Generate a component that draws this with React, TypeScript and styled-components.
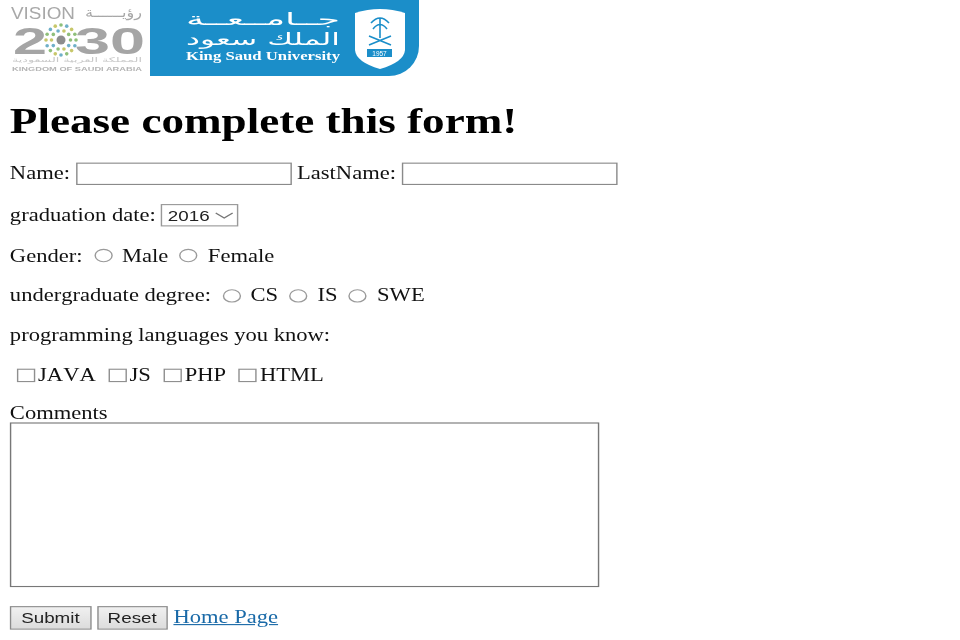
import React from 'react'
import styled, { createGlobalStyle } from 'styled-components'

const Global = createGlobalStyle`
	html, body {
		margin: 0;
		padding: 0;
		background: #fff;
	}
	body {
		font-family: 'Liberation Serif', 'Times New Roman', serif;
		font-size: 16px;
		color: #111;
		overflow: hidden;
	}
`

const Page = styled.div`
	width: 960px;
	height: 640px;
	overflow: hidden;
`

const Header = styled.header`
	display: flex;
	height: 76px;
	filter: blur(0.45px);
`

const BlueLogo = styled.div`
	width: 269px;
	height: 76px;
	background: #1b8ec9;
	border-bottom-right-radius: 30px;
`

/* the whole form is wider and taller than a normal page, like the picture */
const Stretched = styled.div`
	width: 681px;
	padding-left: 7px;
	box-sizing: border-box;
	transform: scale(1.41, 1.12);
	transform-origin: left top;
	filter: blur(0.3px);
`

const Title = styled.h1`
	font-size: 32px;
	font-weight: bold;
	line-height: 36px;
	margin: 24.7px 0 18.6px;
	color: #000;
`

const Row = styled.div<{ $gap: number }>`
	display: flex;
	align-items: center;
	height: 20px;
	margin-bottom: ${(p) => p.$gap}px;
	white-space: pre;
	font-kerning: none;
`

const TextInput = styled.input`
	width: 153px;
	height: 20.5px;
	box-sizing: border-box;
	margin: 0.8px 4px 0;
	border: 1px solid #8a8a8a;
	padding: 0;
	background: #fff;
`

const YearSelect = styled.select`
	appearance: none;
	width: 55px;
	height: 19.6px;
	box-sizing: border-box;
	margin: 0 0 0 3.5px;
	border: 1px solid #999;
	border-radius: 0;
	padding: 0 0 0 4px;
	font-family: 'Liberation Sans', Arial, sans-serif;
	font-size: 13.33px;
	color: #222;
	background: #fff url("data:image/svg+xml,%3Csvg xmlns='http://www.w3.org/2000/svg' width='14' height='7'%3E%3Cpath d='M1 1l6 4.5L13 1' fill='none' stroke='%23777'/%3E%3C/svg%3E") no-repeat right 2px center;
`

const Radio = styled.input.attrs({ type: 'radio' })`
	appearance: none;
	flex: none;
	width: 13px;
	height: 12px;
	margin: 0 7px 1px 8px;
	border: 1px solid #9a9a9a;
	border-radius: 50%;
	background: #fff;
`

const Check = styled.input.attrs({ type: 'checkbox' })<{ $first?: boolean }>`
	appearance: none;
	flex: none;
	width: 13px;
	height: 12px;
	margin: 0 2px 0 ${(p) => (p.$first ? 5 : 9)}px;
	border: 1px solid #8f8f8f;
	background: #fff;
`

const CommentLabel = styled.div`
	line-height: 16px;
	height: 16px;
`

const Comments = styled.textarea`
	display: block;
	width: 418px;
	height: 147.3px;
	box-sizing: border-box;
	margin: 0 0 17px;
	border: 1px solid #777;
	padding: 0;
	resize: none;
	background: #fff;
`

const Actions = styled.div`
	display: flex;
	align-items: center;
	height: 20.5px;
`

const ActionButton = styled.button<{ $w: number }>`
	height: 20.5px;
	box-sizing: border-box;
	width: ${(p) => p.$w}px;
	padding: 0;
	margin-right: 4px;
	border: 1px solid #8a8a8a;
	background: linear-gradient(#f0f0f0, #dcdcdc);
	font-family: 'Liberation Sans', Arial, sans-serif;
	font-size: 13.33px;
	color: #222;
`

const HomeLink = styled.a`
	color: #1a6aa8;
	text-decoration: underline;
`

function VisionLogo() {
	const colors = ['#8fbf7a', '#6fb0c8', '#c7c76a']
	const ring = (count: number, r: number, size: number) =>
		Array.from({ length: count }, (_, i) => {
			const a = (i / count) * Math.PI * 2
			return (
				<circle
					key={`${r}-${i}`}
					cx={61 + Math.cos(a) * r}
					cy={40 + Math.sin(a) * r}
					r={size}
					fill={colors[i % 3]}
				/>
			)
		})
	return (
		<svg width={150} height={76} viewBox='0 0 150 76'>
			<text x={11} y={19} fontFamily='Liberation Sans' fontSize={16} fill='#a8a8a8' textLength={64} lengthAdjust='spacingAndGlyphs'>VISION</text>
			<text x={142} y={17} textAnchor='end' fontFamily='DejaVu Sans' fontSize={14} fill='#a8a8a8' textLength={57} lengthAdjust='spacingAndGlyphs'>رؤيــــــة</text>
			<text x={13} y={54} fontFamily='Liberation Sans' fontWeight='bold' fontSize={37} fill='#a5a5a5' textLength={34} lengthAdjust='spacingAndGlyphs'>2</text>
			<text x={75} y={54} fontFamily='Liberation Sans' fontWeight='bold' fontSize={37} fill='#a5a5a5' textLength={70} lengthAdjust='spacingAndGlyphs'>30</text>
			{ring(16, 15, 1.8)}
			{ring(10, 9.5, 1.8)}
			<circle cx={61} cy={40} r={4.5} fill='#8d8d8d' />
			<text x={142} y={62} textAnchor='end' fontFamily='DejaVu Sans' fontSize={6.5} fill='#c8c8c8' textLength={130} lengthAdjust='spacingAndGlyphs'>المملكة العربية السعودية</text>
			<text x={12} y={71} fontFamily='Liberation Sans' fontWeight='bold' fontSize={5.5} fill='#b5b5b5' textLength={130} lengthAdjust='spacingAndGlyphs'>KINGDOM OF SAUDI ARABIA</text>
		</svg>
	)
}

function KsuMark() {
	return (
		<svg width={269} height={76} viewBox='0 0 269 76'>
			<text x={190} y={25} textAnchor='end' fontFamily='DejaVu Sans' fontSize={17} fill='#fff' textLength={154} lengthAdjust='spacingAndGlyphs'>جــامــعــة</text>
			<text x={190} y={45} textAnchor='end' fontFamily='DejaVu Sans' fontSize={17} fill='#fff' textLength={154} lengthAdjust='spacingAndGlyphs'>الملك سعود</text>
			<text x={36} y={60} fontFamily='Liberation Serif' fontWeight='bold' fontSize={12.5} fill='#fff' textLength={154} lengthAdjust='spacingAndGlyphs'>King Saud University</text>
			<path d='M205 13 Q230 5 255 13 V50 Q254 62 230 69 Q206 62 205 50 Z' fill='#fff' />
			<path d='M230 18 V38 M221 23 Q230 13 239 23 M223 29 Q230 20 237 29 M219 36 L241 45 M241 36 L219 45' fill='none' stroke='#1b8ec9' strokeWidth={1.6} />
			<rect x={217} y={49} width={25} height={8} fill='#1b8ec9' />
			<text x={229.5} y={55.5} textAnchor='middle' fontFamily='Liberation Sans' fontSize={6.5} fill='#fff'>1957</text>
		</svg>
	)
}

export default function App() {
	return (
		<Page>
			<Global />
			<Header>
				<VisionLogo />
				<BlueLogo>
					<KsuMark />
				</BlueLogo>
			</Header>
			<Stretched>
				<form>
					<Title>Please complete this form!</Title>
					<Row $gap={17.5}>
						Name:<TextInput />LastName:<TextInput />
					</Row>
					<Row $gap={16.6}>
						graduation date:
						<YearSelect defaultValue='2016'>
							<option>2016</option>
							<option>2017</option>
						</YearSelect>
					</Row>
					<Row $gap={15.7}>
						Gender:<Radio name='gender' />Male<Radio name='gender' />Female
					</Row>
					<Row $gap={14.9}>
						undergraduate degree:<Radio name='degree' />CS<Radio name='degree' />IS<Radio name='degree' />SWE
					</Row>
					<Row $gap={15.6}>programming languages you know:</Row>
					<Row $gap={16}>
						<Check $first />JAVA<Check />JS<Check />PHP<Check />HTML
					</Row>
					<CommentLabel>Comments</CommentLabel>
					<Comments />
					<Actions>
						<ActionButton type='button' $w={57.5}>Submit</ActionButton>
						<ActionButton type='button' $w={50.5}>Reset</ActionButton>
						<HomeLink href='#home'>Home Page</HomeLink>
					</Actions>
				</form>
			</Stretched>
		</Page>
	)
}
